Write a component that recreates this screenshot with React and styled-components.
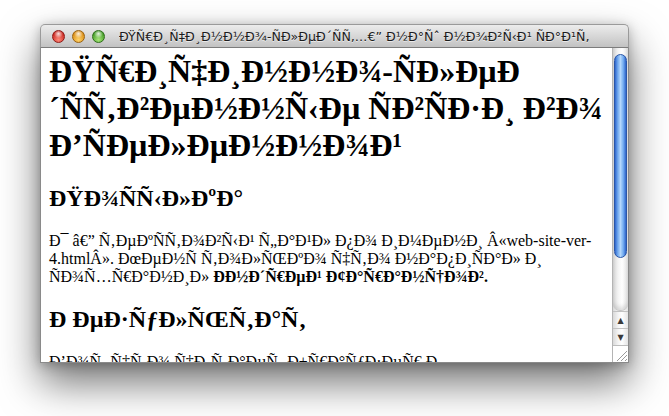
import React from "react";
import styled, { createGlobalStyle } from "styled-components";

const GlobalStyle = createGlobalStyle`
  html, body {
    margin: 0;
    padding: 0;
    background: #fff;
  }
`;

const Desktop = styled.div`
  height: 416px;
  padding: 24px 0 0 40px;
  box-sizing: border-box;
  background: #fff;
  overflow: hidden;
`;

const Window = styled.div`
  width: 589px;
  border-radius: 5px 5px 0 0;
  box-shadow: 0 20px 40px rgba(0, 0, 0, 0.55), 0 2px 12px rgba(0, 0, 0, 0.25);
`;

const TitleBar = styled.div`
  height: 22px;
  display: flex;
  align-items: center;
  padding-left: 11px;
  background: linear-gradient(#ececec, #d3d3d3 60%, #c2c2c2);
  border: 1px solid #9a9a9a;
  border-bottom-color: #7c7c7c;
  border-radius: 5px 5px 0 0;
`;

const Lights = styled.div`
  display: flex;
  gap: 7px;
`;

const Light = styled.span`
  width: 13px;
  height: 13px;
  border-radius: 50%;
  box-sizing: border-box;
  border: 1px solid ${(p) => p.$edge};
  background: radial-gradient(circle at 50% 25%, rgba(255, 255, 255, 0.85) 0, rgba(255, 255, 255, 0) 45%),
    radial-gradient(circle at 50% 80%, ${(p) => p.$glow}, ${(p) => p.$base} 75%);
`;

const Title = styled.div`
  margin-left: 14px;
  font-family: "DejaVu Sans", "Liberation Sans", sans-serif;
  font-size: 12.6px;
  color: #1c1c1c;
  white-space: nowrap;
  overflow: hidden;
  text-shadow: 0 1px 0 rgba(255, 255, 255, 0.6);
`;

const Body = styled.div`
  display: flex;
  height: 314px;
  border: 1px solid #8a8a8a;
  border-top: none;
`;

const Viewport = styled.div`
  flex: 1;
  overflow: hidden;
  background: #fff;
  padding: 0 8px;
  font-family: "Liberation Serif", "Times New Roman", serif;
  color: #000;
`;

const Heading = styled.h1`
  font-size: 32px;
  font-weight: bold;
  margin: 5px 0 21px;
`;

const SubHeading = styled.h2`
  font-size: 24px;
  font-weight: bold;
  margin: 20px 0;
`;

const Text = styled.p`
  font-size: 16px;
  margin: 16px 0;
`;

const Scrollbar = styled.div`
  width: 15px;
  display: flex;
  flex-direction: column;
  border-left: 1px solid #b4b4b4;
  background: linear-gradient(90deg, #d9d9d9, #f4f4f4 35%, #fff 60%, #e4e4e4);
`;

const Track = styled.div`
  flex: 1;
  display: flex;
  flex-direction: column;
  padding-top: 6px;
  border-bottom: 1px solid #c4c4c4;
  border-radius: 0 0 7px 7px;
  box-shadow: inset 0 -3px 4px rgba(0, 0, 0, 0.12);
`;

const Thumb = styled.div`
  height: 204px;
  margin: 0 1px;
  border-radius: 7px;
  box-sizing: border-box;
  border: 1px solid #2a56a6;
  background: linear-gradient(90deg, #2f66cc 0%, #70a8ee 25%, #b3d7fc 50%, #74adf1 75%, #2d63c9 100%);
`;

const ArrowButton = styled.div`
  height: 16px;
  display: flex;
  align-items: center;
  justify-content: center;
  border-top: 1px solid #c2c2c2;
  font-size: 8px;
  color: #3a3a3a;
  font-family: "DejaVu Sans", sans-serif;
`;

const Grip = styled.div`
  height: 16px;
  background: #fff;
  border-top: 1px solid #bdbdbd;
  display: flex;
  align-items: flex-end;
  justify-content: flex-end;
`;

const lights = [
  { base: "#c8221c", glow: "#ff8a7a", edge: "#8e1a16" },
  { base: "#d98a10", glow: "#ffd36a", edge: "#9a6210" },
  { base: "#3f9a22", glow: "#a8e67a", edge: "#2e6e1a" },
];

export default function App() {
  return (
    <Desktop>
      <GlobalStyle />
      <Window>
        <TitleBar>
          <Lights>
            {lights.map((l) => (
              <Light key={l.base} $base={l.base} $glow={l.glow} $edge={l.edge} />
            ))}
          </Lights>
          <Title>{"ÐŸÑ€Ð¸Ñ‡Ð¸Ð½Ð½Ð¾-ÑÐ»ÐµÐ´ÑÑ‚…€\u201D Ð½Ð°Ñˆ Ð½Ð¾Ð²Ñ‹Ð¹ ÑÐ°Ð¹Ñ‚"}</Title>
        </TitleBar>
        <Body>
          <Viewport>
            <Heading>
              {"ÐŸÑ€Ð¸Ñ‡Ð¸Ð½Ð½Ð¾-ÑÐ»ÐµÐ"}
              <br />
              {"\u00B4ÑÑ\u201AÐ²ÐµÐ½Ð½Ñ‹Ðµ ÑÐ²ÑÐ·Ð¸ Ð²Ð¾"}
              <br />
              {"Ð\u2019ÑÐµÐ»ÐµÐ½Ð½Ð¾Ð¹"}
            </Heading>
            <SubHeading>{"ÐŸÐ¾ÑÑ‹Ð»ÐºÐ°"}</SubHeading>
            <Text>
              {"Ð¯ â€\u201D Ñ\u201AÐµÐºÑÑ\u201AÐ¾Ð²Ñ‹Ð¹ Ñ„Ð°Ð¹Ð» Ð¿Ð¾ Ð¸Ð¼ÐµÐ½Ð¸ Â«web-site-ver-"}
              <br />
              {"4.htmlÂ». ÐœÐµÐ½Ñ Ñ\u201AÐ¾Ð»ÑŒÐºÐ¾ Ñ‡Ñ\u201AÐ¾ Ð½Ð°Ð¿Ð¸ÑÐ°Ð» Ð¸"}
              <br />
              {"ÑÐ¾Ñ…Ñ€Ð°Ð½Ð¸Ð» "}
              <strong>{"ÐÐ½Ð´Ñ€ÐµÐ¹ Ð¢Ð°Ñ€Ð°Ð½Ñ†Ð¾Ð²."}</strong>
            </Text>
            <SubHeading>{"Ð\u00A0ÐµÐ·ÑƒÐ»ÑŒÑ\u201AÐ°Ñ\u201A"}</SubHeading>
            <Text>
              {"Ð\u2019Ð¾Ñ\u201A Ñ‡Ñ\u201AÐ¾ Ñ\u2021Ð¸Ñ\u201AÐ°ÐµÑ\u201A Ð±Ñ€Ð°ÑƒÐ·ÐµÑ€ Ð¸ Ð¿Ð¾ÐºÐ°Ð·Ñ‹Ð²Ð°ÐµÑ\u201A"}
            </Text>
          </Viewport>
          <Scrollbar>
            <Track>
              <Thumb />
            </Track>
            <ArrowButton>▲</ArrowButton>
            <ArrowButton>▼</ArrowButton>
            <Grip>
              <svg width="14" height="14" viewBox="0 0 14 14">
                <path d="M13 3 L3 13 M13 7 L7 13 M13 11 L11 13" stroke="#9a9a9a" strokeWidth="1" />
              </svg>
            </Grip>
          </Scrollbar>
        </Body>
      </Window>
    </Desktop>
  );
}
